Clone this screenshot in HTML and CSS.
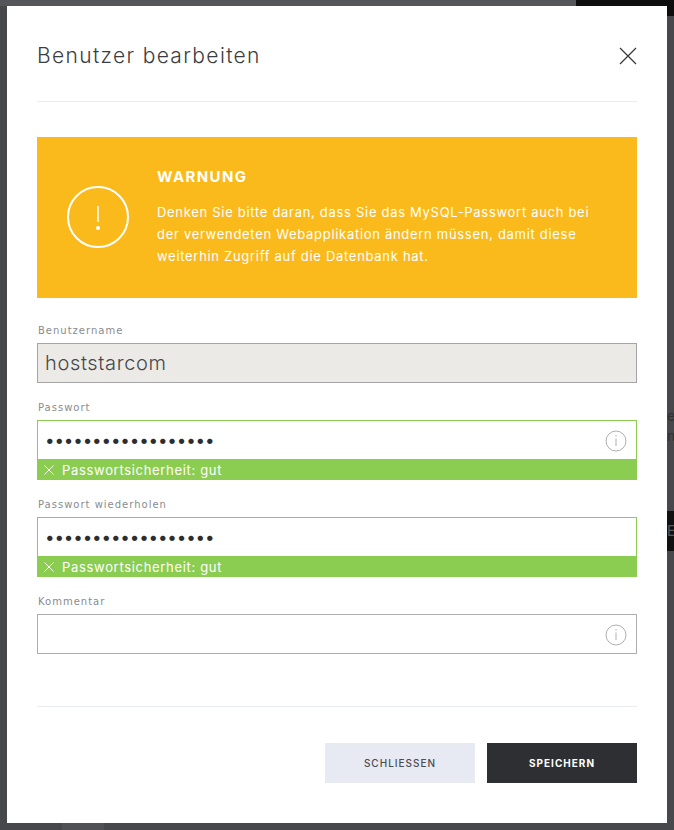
FILE: index.html
```html
<!DOCTYPE html>
<html lang="de">
<head>
<meta charset="UTF-8">
<title>Benutzer bearbeiten</title>
<link rel="stylesheet" href="styles.css">
</head>
<body>
<div class="backdrop">
<div class="shade shade-top"></div>
<div class="shade shade-black"></div>
<div class="shade shade-band"></div>
<div class="shade shade-bottom"></div>
<div class="peek peek-right">e<br>n</div>
<div class="peek peek-band">E</div>
</div>

<div class="modal">
<div class="head">
<h1>Benutzer bearbeiten</h1>
<svg class="close" viewBox="0 0 18 18"><path d="M1 1L17 17M17 1L1 17"/></svg>
</div>

<div class="warning">
<svg class="warn-icon" viewBox="0 0 62 62"><circle cx="31" cy="31" r="30"/><path d="M31 20V36"/><circle class="warn-dot" cx="31" cy="42" r="2"/></svg>
<div class="warn-text">
<h2>WARNUNG</h2>
<p>Denken Sie bitte daran, dass Sie das MySQL-Passwort auch bei der verwendeten Webapplikation ändern müssen, damit diese weiterhin Zugriff auf die Datenbank hat.</p>
</div>
</div>

<div class="field">
<label>Benutzername</label>
<div class="input disabled">hoststarcom</div>
</div>

<div class="field">
<label>Passwort</label>
<div class="input ok"><span class="dots">••••••••••••••••••</span>
<svg class="info" viewBox="0 0 22 22"><circle cx="11" cy="11" r="10"/><path d="M11 8.5V16M11 5V6.5"/></svg>
</div>
<div class="strength"><svg viewBox="0 0 10 10"><path d="M0.5 0.5L9.5 9.5M9.5 0.5L0.5 9.5"/></svg>Passwortsicherheit: gut</div>
</div>

<div class="field">
<label>Passwort wiederholen</label>
<div class="input ok"><span class="dots">••••••••••••••••••</span></div>
<div class="strength"><svg viewBox="0 0 10 10"><path d="M0.5 0.5L9.5 9.5M9.5 0.5L0.5 9.5"/></svg>Passwortsicherheit: gut</div>
</div>

<div class="field">
<label>Kommentar</label>
<div class="input comment">
<svg class="info" viewBox="0 0 22 22"><circle cx="11" cy="11" r="10"/><path d="M11 8.5V16M11 5V6.5"/></svg>
</div>
</div>

<div class="foot">
<button class="btn btn-light">SCHLIESSEN</button>
<button class="btn btn-dark">SPEICHERN</button>
</div>
</div>
</body>
</html>
```

FILE: styles.css
```css
*{
box-sizing: border-box;
margin: 0; padding: 0;
}

html,body{
height: 100%;
overflow: hidden;
}

body{
background: #47484b;
font-family: "Inter", "Liberation Sans", sans-serif;
color: #3a3b3e;
padding: 6px 7px 7px;
}

/*--- page behind the overlay ---*/
.shade{
position: absolute;
}

.shade-top{
left: 0; top: 0;
width: 576px; height: 6px;
background: #55565a;
}

.shade-black{
left: 576px; top: 0;
width: 98px; height: 16px;
background: #0e0e0f;
}

.shade-band{
left: 667px; top: 511px;
width: 7px; height: 40px;
background: #111112;
}

.shade-bottom{
left: 62px; top: 823px;
width: 42px; height: 7px;
background: #505154;
}

.peek{
position: absolute;
font-size: 14px;
line-height: 20px;
color: #2f3032;
}

.peek-right{
left: 667px; top: 406px;
}

.peek-band{
left: 667px; top: 521px;
color: #59595c;
}

/*--- modal ---*/
.modal{
position: relative;
width: 660px;
height: 817px;
background: #fff;
padding: 0 30px;
}

.head{
height: 96px;
border-bottom: 1px solid #e9eaf2;
display: flex;
align-items: center;
justify-content: space-between;
padding-top: 4px;
}

h1{
font-size: 21px;
font-weight: 300;
letter-spacing: 1.35px;
color: #3c3d40;
}

.close{
width: 18px; height: 18px;
fill: none;
stroke: #3a3b3e;
stroke-width: 1.3;
}

/*--- warning ---*/
.warning{
margin-top: 35px;
height: 161px;
background: #fbba1b;
color: #fff;
display: flex;
align-items: center;
padding-left: 30px;
gap: 28px;
}

.warn-icon{
width: 62px; height: 62px;
flex: none;
margin-bottom: 2px;
fill: none;
stroke: #fff;
stroke-width: 2;
}

.warn-icon path{
stroke-width: 1.5;
}

.warn-icon .warn-dot{
fill: #fff;
stroke: none;
}

.warn-text{
width: 440px;
}

h2{
font-size: 15px;
font-weight: 700;
letter-spacing: 1.4px;
line-height: 20px;
margin-bottom: 14px;
}

.warning p{
font-size: 13px;
line-height: 22px;
letter-spacing: 0.7px;
margin-bottom: 1px;
}

/*--- form ---*/
.field{
margin-top: 18px;
}

.warning + .field{
margin-top: 26px;
}

label{
display: block;
font-family: "DejaVu Sans", sans-serif;
font-size: 10px;
line-height: 13px;
letter-spacing: 1px;
color: #8a8b8e;
margin-bottom: 6px;
padding-left: 1px;
}

.input{
position: relative;
height: 40px;
border: 1px solid #a5a5a5;
display: flex;
align-items: center;
padding-left: 7px;
background: #fff;
}

.disabled{
background: #eceae6;
font-size: 20px;
font-weight: 300;
letter-spacing: 0.65px;
color: #47484b;
}

.ok{
border-color: #8bcd50;
}

.comment{
border-color: #adadb2;
}

.dots{
font-size: 17px;
letter-spacing: -0.15px;
color: #2c2d30;
}

.info{
position: absolute;
right: 9px; top: 9px;
width: 22px; height: 22px;
fill: none;
stroke: #aeafb5;
stroke-width: 1;
}

.strength{
height: 20px;
background: #8bcd50;
color: #fff;
font-size: 13px;
letter-spacing: 0.68px;
display: flex;
align-items: center;
padding-left: 7px;
}

.strength svg{
width: 10px; height: 10px;
margin-right: 8px;
fill: none;
stroke: #fff;
stroke-width: 1;
}

/*--- footer ---*/
.foot{
margin-top: 52px;
border-top: 1px solid #e9eaf2;
padding-top: 36px;
display: flex;
justify-content: flex-end;
gap: 12px;
}

.btn{
width: 150px; height: 40px;
border: none;
font-family: inherit;
font-size: 10px;
letter-spacing: 1px;
}

.btn-light{
background: #e7eaf3;
color: #4a4b50;
font-weight: 500;
}

.btn-dark{
background: #2e2f33;
color: #fff;
font-weight: 700;
}
```
